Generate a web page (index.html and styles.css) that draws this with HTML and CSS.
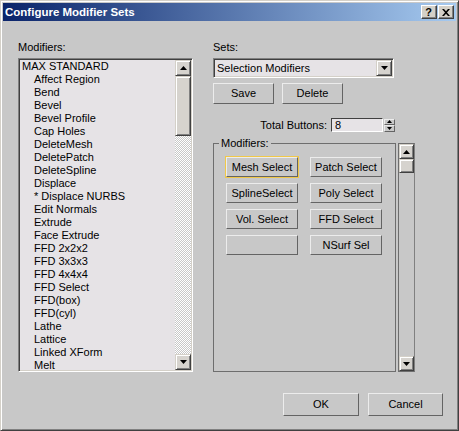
FILE: index.html
```html
<!DOCTYPE html>
<html>
<head>
  <title>Configure Modifier Sets</title>
  <link rel="stylesheet" href="styles.css">
</head>
<body>
  <div class="window">
    <div class="titlebar">
      <span class="title">Configure Modifier Sets</span>
      <div class="caption-buttons">
        <div class="caption-btn help">?</div>
        <div class="caption-btn">
          <svg width="8" height="7" viewBox="0 0 8 7"><path d="M0 0h2l2 2.2L6 0h2L5 3.5 8 7H6L4 4.8 2 7H0l3-3.5z" fill="#000"/></svg>
        </div>
      </div>
    </div>

    <div class="main">
      <div class="left-col">
        <div class="label">Modifiers:</div>
        <div class="listbox">
          <ul class="items">
            <li class="head">MAX STANDARD</li>
            <li>Affect Region</li>
            <li>Bend</li>
            <li>Bevel</li>
            <li>Bevel Profile</li>
            <li>Cap Holes</li>
            <li>DeleteMesh</li>
            <li>DeletePatch</li>
            <li>DeleteSpline</li>
            <li>Displace</li>
            <li>* Displace NURBS</li>
            <li>Edit Normals</li>
            <li>Extrude</li>
            <li>Face Extrude</li>
            <li>FFD 2x2x2</li>
            <li>FFD 3x3x3</li>
            <li>FFD 4x4x4</li>
            <li>FFD Select</li>
            <li>FFD(box)</li>
            <li>FFD(cyl)</li>
            <li>Lathe</li>
            <li>Lattice</li>
            <li>Linked XForm</li>
            <li>Melt</li>
          </ul>
          <div class="vscroll">
            <div class="sb-btn"><svg width="7" height="4" viewBox="0 0 7 4"><path d="M3.5 0L7 4H0z"/></svg></div>
            <div class="sb-thumb"></div>
            <div class="sb-track"></div>
            <div class="sb-btn"><svg width="7" height="4" viewBox="0 0 7 4"><path d="M0 0h7L3.5 4z"/></svg></div>
          </div>
        </div>
      </div>

      <div class="right-col">
        <div class="label">Sets:</div>
        <div class="combo">
          <span class="combo-text">Selection Modifiers</span>
          <div class="combo-btn"><svg width="7" height="4" viewBox="0 0 7 4"><path d="M0 0h7L3.5 4z"/></svg></div>
        </div>
        <div class="set-actions">
          <button class="btn set-btn">Save</button>
          <button class="btn set-btn">Delete</button>
        </div>
        <div class="total-row">
          <span>Total Buttons:</span>
          <div class="spin-input">8</div>
          <div class="spinner">
            <div class="spin-half"><svg width="5" height="3" viewBox="0 0 5 3"><path d="M2.5 0L5 3H0z"/></svg></div>
            <div class="spin-half"><svg width="5" height="3" viewBox="0 0 5 3"><path d="M0 0h5L2.5 3z"/></svg></div>
          </div>
        </div>
        <div class="group-row">
          <fieldset class="group">
            <legend>Modifiers:</legend>
            <div class="mod-grid">
              <button class="btn mod-btn active">Mesh Select</button>
              <button class="btn mod-btn">Patch Select</button>
              <button class="btn mod-btn">SplineSelect</button>
              <button class="btn mod-btn">Poly Select</button>
              <button class="btn mod-btn">Vol. Select</button>
              <button class="btn mod-btn">FFD Select</button>
              <button class="btn mod-btn"></button>
              <button class="btn mod-btn">NSurf Sel</button>
            </div>
          </fieldset>
          <div class="group-scroll">
            <div class="sb-btn"><svg width="7" height="4" viewBox="0 0 7 4"><path d="M3.5 0L7 4H0z"/></svg></div>
            <div class="sb-thumb small"></div>
            <div class="group-track"></div>
            <div class="sb-btn"><svg width="7" height="4" viewBox="0 0 7 4"><path d="M0 0h7L3.5 4z"/></svg></div>
          </div>
        </div>
      </div>
    </div>

    <div class="footer">
      <button class="btn dlg-btn">OK</button>
      <button class="btn dlg-btn cancel">Cancel</button>
    </div>
  </div>
</body>
</html>
```

FILE: styles.css
```css
:root {
  --face: #c8c8c8;
  --field: #e6e3e6;
  --light: #ececec;
  --dark: #646464;
  --sb-face: #d6d3ce;
}

* {
  box-sizing: border-box;
}

body {
  margin: 0;
  font-family: 'Liberation Sans', Arial, sans-serif;
  font-size: 11px;
  line-height: 13px;
  color: #000;
  background: var(--face);
}

.window {
  width: 459px;
  height: 431px;
  padding: 2px;
  background: var(--face);
  border: 1px solid;
  border-color: #d4d0c8 #404040 #404040 #d4d0c8;
  box-shadow: inset 1px 1px #fff, inset -1px -1px #808080;
  display: flex;
  flex-direction: column;
}

.titlebar {
  height: 18px;
  display: flex;
  align-items: center;
  justify-content: space-between;
  padding: 0 2px;
  background: linear-gradient(to right, #0a246a, #a6caf0);
}

.title {
  color: #fff;
  font-weight: bold;
  font-size: 11.5px;
}

.caption-buttons {
  display: flex;
  gap: 1px;
}

.caption-btn {
  width: 16px;
  height: 14px;
  background: #d4d0c8;
  border: 1px solid;
  border-color: #fff #404040 #404040 #fff;
  box-shadow: inset -1px -1px #808080;
  display: flex;
  align-items: center;
  justify-content: center;
}

.caption-btn.help {
  font-weight: bold;
  font-size: 11px;
  line-height: 12px;
  padding-right: 1px;
}

.main {
  display: flex;
  gap: 20px;
  padding: 20px 0 0 15px;
}

.left-col {
  width: 175px;
}

.label {
  height: 13px;
}

.listbox {
  margin-top: 4px;
  height: 314px;
  background: var(--field);
  border: 1px solid;
  border-color: #808080 #fff #fff #808080;
  box-shadow: inset 1px 1px #404040, inset -1px -1px #d4d0c8;
  padding: 1px;
  display: flex;
}

.items {
  flex: 1;
  margin: 0;
  padding: 0;
  list-style: none;
  overflow: hidden;
}

.items li {
  padding-left: 14px;
  white-space: nowrap;
}

.items li.head {
  padding-left: 2px;
}

.vscroll {
  width: 16px;
  display: flex;
  flex-direction: column;
}

.sb-btn {
  width: 16px;
  height: 16px;
  flex: none;
  background: var(--sb-face);
  border: 1px solid;
  border-color: #d4d0c8 #404040 #404040 #d4d0c8;
  box-shadow: inset 1px 1px #fff, inset -1px -1px #808080;
  display: flex;
  align-items: center;
  justify-content: center;
}

.sb-btn svg {
  fill: #000;
}

.sb-thumb {
  height: 60px;
  flex: none;
  background: var(--sb-face);
  border: 1px solid;
  border-color: #d4d0c8 #404040 #404040 #d4d0c8;
  box-shadow: inset 1px 1px #fff, inset -1px -1px #808080;
}

.sb-thumb.small {
  height: 14px;
}

.sb-track {
  flex: 1;
  background-image: conic-gradient(#fff 25%, #c8c8c8 0 50%, #fff 0 75%, #c8c8c8 0);
  background-size: 2px 2px;
}

.right-col {
  width: 202px;
}

.combo {
  margin-top: 4px;
  width: 181px;
  height: 20px;
  background: var(--field);
  border: 1px solid;
  border-color: #808080 #fff #fff #808080;
  box-shadow: inset 1px 1px #404040, inset -1px -1px #d4d0c8;
  padding: 1px;
  display: flex;
  align-items: center;
}

.combo-text {
  flex: 1;
  padding-left: 2px;
}

.combo-btn {
  width: 16px;
  height: 16px;
  background: var(--sb-face);
  border: 1px solid;
  border-color: #d4d0c8 #404040 #404040 #d4d0c8;
  box-shadow: inset 1px 1px #fff, inset -1px -1px #808080;
  display: flex;
  align-items: center;
  justify-content: center;
}

.btn {
  font-family: inherit;
  font-size: 11px;
  line-height: 13px;
  color: #000;
  background: var(--face);
  border: 1px solid;
  border-color: var(--light) var(--dark) var(--dark) var(--light);
  padding: 0;
  margin: 0;
  display: flex;
  align-items: center;
  justify-content: center;
}

.set-actions {
  margin-top: 5px;
  display: flex;
  gap: 8px;
}

.set-btn {
  width: 61px;
  height: 21px;
}

.total-row {
  margin-top: 14px;
  height: 14px;
  padding-right: 20px;
  display: flex;
  justify-content: flex-end;
  align-items: center;
}

.spin-input {
  margin-left: 4px;
  width: 52px;
  height: 14px;
  background: var(--field);
  border: 1px solid;
  border-color: #404040 #fff #fff #404040;
  padding-left: 3px;
  line-height: 12px;
}

.spinner {
  margin-left: 1px;
  width: 11px;
  height: 13px;
  display: flex;
  flex-direction: column;
}

.spin-half {
  flex: 1;
  background: var(--face);
  border: 1px solid;
  border-color: var(--light) var(--dark) var(--dark) var(--light);
  display: flex;
  align-items: center;
  justify-content: center;
}

.spin-half svg {
  fill: #000;
}

.group-row {
  margin-top: 5px;
  display: flex;
  gap: 2px;
}

.group {
  margin: 0;
  width: 183px;
  height: 235px;
  min-width: 0;
  border: 1px solid #6e6e6e;
  padding: 7px 0 0 12px;
}

.group legend {
  margin-left: -7px;
  padding: 0 2px;
  line-height: 13px;
}

.mod-grid {
  display: grid;
  grid-template-columns: 72px 72px;
  column-gap: 12px;
  row-gap: 6px;
}

.mod-btn {
  height: 20px;
}

.mod-btn.active {
  outline: 1px solid #f0c848;
}

.group-scroll {
  margin-top: 6px;
  width: 17px;
  height: 229px;
  border: 1px solid #6e6e6e;
  border-right-color: #808080;
  display: flex;
  flex-direction: column;
}

.group-scroll .sb-btn {
  width: 15px;
  height: 15px;
}

.group-track {
  flex: 1;
}

.footer {
  margin-top: 21px;
  padding-right: 13px;
  display: flex;
  justify-content: flex-end;
  gap: 9px;
}

.dlg-btn {
  width: 76px;
  height: 23px;
}

.dlg-btn.cancel {
  width: 75px;
}
```
